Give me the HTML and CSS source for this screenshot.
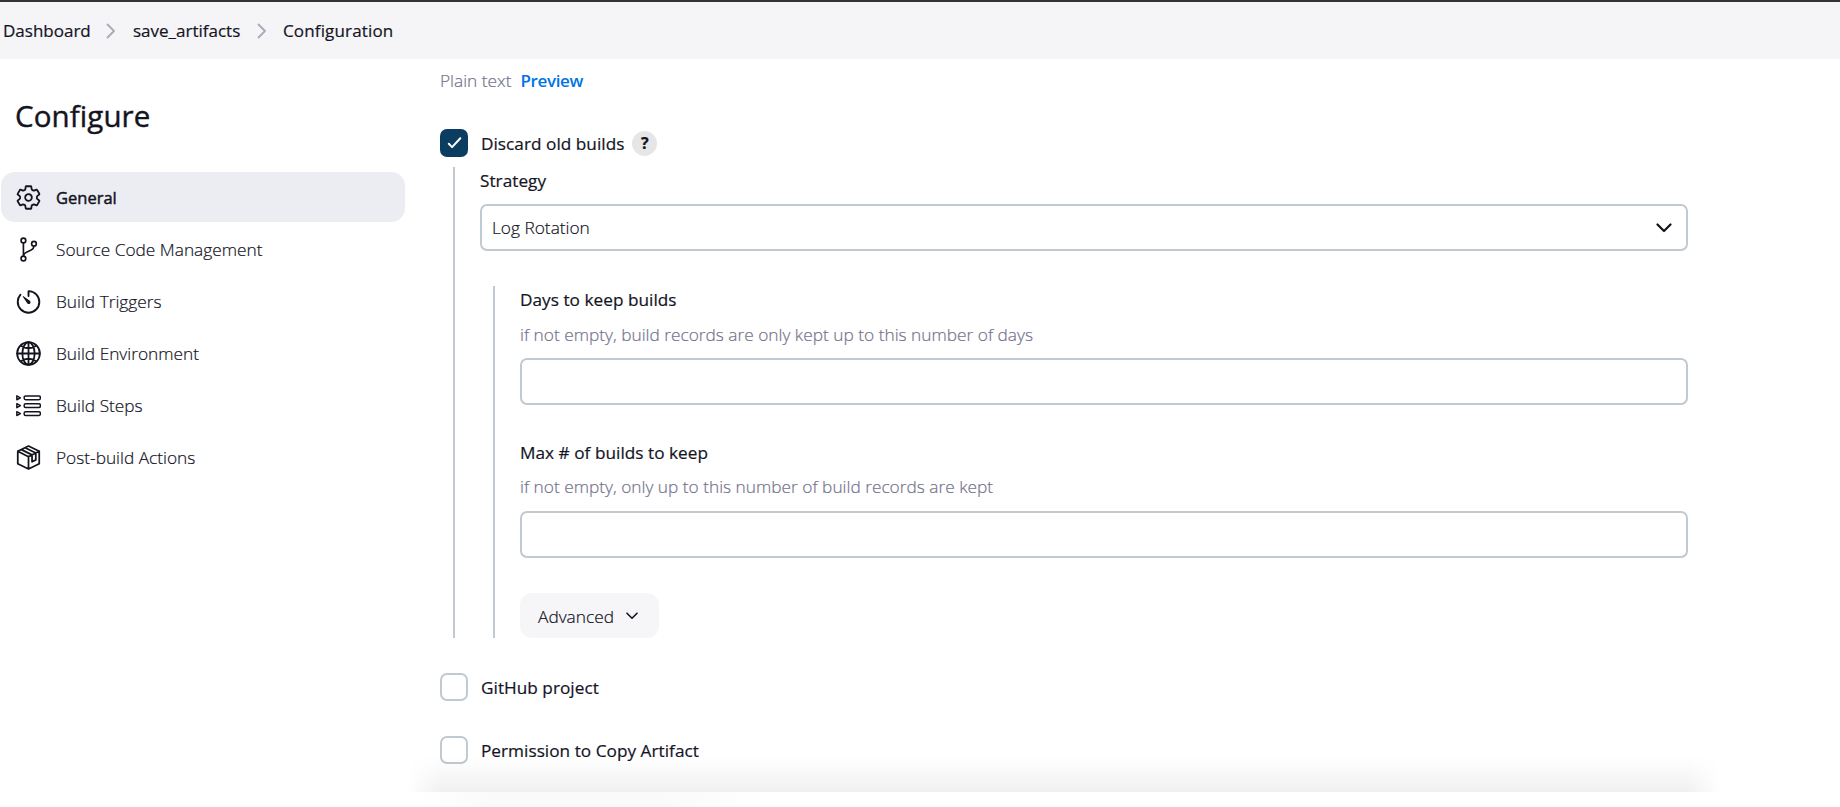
FILE: index.html
```html
<!DOCTYPE html>
<html lang="en">
<head>
<meta charset="utf-8">
<title>save_artifacts Config</title>
<link rel="stylesheet" href="styles.css">
</head>
<body>
<header class="breadcrumbs">
  <span class="crumb crumb-home">Dashboard</span>
  <svg class="crumb-sep" viewBox="0 0 10 16"><path d="M1.5 1.5 8 8l-6.500 6.500"/></svg>
  <span class="crumb crumb-job">save_artifacts</span>
  <svg class="crumb-sep" viewBox="0 0 10 16"><path d="M1.500 1.500 8 8l-6.500 6.500"/></svg>
  <span class="crumb crumb-page">Configuration</span>
</header>
<div class="layout">
  <aside class="sidebar">
    <h1 class="title">Configure</h1>
    <nav class="tasks">
      <a class="task task-active">
        <svg class="icon" viewBox="18 18 476 476"><path d="M262.290 192.310a64 64 0 1 0 57.400 57.400 64.130 64.130 0 0 0-57.400-57.400zM416.390 256a154.340 154.340 0 0 1-1.530 20.790l45.210 35.460a10.810 10.810 0 0 1 2.450 13.750l-42.770 74a10.810 10.810 0 0 1-13.140 4.590l-44.900-18.080a16.110 16.110 0 0 0-15.170 1.750A164.480 164.480 0 0 1 325 400.800a15.940 15.940 0 0 0-8.820 12.140l-6.730 47.890a11.080 11.080 0 0 1-10.680 9.170h-85.540a11.110 11.110 0 0 1-10.690-8.870l-6.720-47.820a16.070 16.070 0 0 0-9-12.220 155.300 155.300 0 0 1-21.460-12.570 16 16 0 0 0-15.110-1.710l-44.890 18.070a10.810 10.810 0 0 1-13.140-4.580l-42.770-74a10.800 10.800 0 0 1 2.450-13.750l38.210-30a16.050 16.050 0 0 0 6-14.080c-.36-4.170-.58-8.330-.58-12.500s.21-8.270.58-12.350a16 16 0 0 0-6.070-13.940l-38.190-30A10.810 10.810 0 0 1 49.480 186l42.770-74a10.810 10.810 0 0 1 13.140-4.590l44.900 18.080a16.110 16.110 0 0 0 15.170-1.750A164.480 164.480 0 0 1 187 111.200a15.940 15.940 0 0 0 8.820-12.140l6.730-47.890A11.080 11.080 0 0 1 213.230 42h85.540a11.110 11.110 0 0 1 10.690 8.870l6.720 47.820a16.070 16.070 0 0 0 9 12.220 155.300 155.300 0 0 1 21.460 12.570 16 16 0 0 0 15.110 1.710l44.890-18.070a10.810 10.810 0 0 1 13.140 4.580l42.770 74a10.800 10.800 0 0 1-2.450 13.750l-38.210 30a16.050 16.050 0 0 0-6.050 14.080c.33 4.140.55 8.300.55 12.470z"/></svg>
        <span>General</span>
      </a>
      <a class="task">
        <svg class="icon" viewBox="0 0 512 512"><circle cx="152" cy="72" r="48"/><circle cx="152" cy="440" r="48"/><circle cx="368" cy="136" r="48"/><path d="M152 392V120M368 184c0 128-216 88-216 208"/></svg>
        <span>Source Code Management</span>
      </a>
      <a class="task">
        <svg class="icon" viewBox="0 0 512 512"><path d="M112.910 128A191.850 191.850 0 0 0 64 254c-1.180 106.350 85.650 193.800 192 194 106.200.2 192-85.830 192-192 0-104.540-83.550-189.610-187.500-192a4.360 4.360 0 0 0-4.500 4.370V152" transform="translate(-38 -30) scale(1.150)"/><path class="solid" d="m233.380 278.630-79-113a8.130 8.130 0 0 1 11.320-11.320l113 79a32.500 32.500 0 0 1-37.250 53.260 33.210 33.210 0 0 1-8.070-7.940z" transform="translate(-38 -30) scale(1.150)"/></svg>
        <span>Build Triggers</span>
      </a>
      <a class="task">
        <svg class="icon" viewBox="18 18 476 476"><circle cx="256" cy="256" r="216"/><path d="M256 40c-60 0-117 97-117 216s57 216 117 216 117-97 117-216S316 40 256 40zM256 40v432M40 256h432M110 110c40 29 91 46 146 46s106-17 146-46M402 402c-40-29-91-46-146-46s-106 17-146 46"/></svg>
        <span>Build Environment</span>
      </a>
      <a class="task">
        <svg class="icon" viewBox="0 0 24 24"><g class="thin"><path d="M.8 2.700v3.800L4.200 4.600zM.8 10.300v3.800l3.400-1.900zM.8 17.900v3.800l3.400-1.900z"/><rect x="7.800" y="2.800" width="15.600" height="3.600" rx="1.500"/><rect x="7.800" y="10.400" width="15.600" height="3.600" rx="1.500"/><rect x="7.800" y="18" width="15.600" height="3.600" rx="1.500"/></g></svg>
        <span>Build Steps</span>
      </a>
      <a class="task">
        <svg class="icon" viewBox="0 0 24 24"><g class="box"><path d="M12 1 22.300 6v12L12 23 1.700 18V6zM1.700 6 12 11.200 22.300 6M12 11.200V23M5.200 4.400l10.200 5.100v6.600l3.600-1.800V7.700L8.800 2.700"/></g></svg>
        <span>Post-build Actions</span>
      </a>
    </nav>
  </aside>
  <main class="form">
    <div class="preview-row"><span class="muted">Plain text</span><a class="link">Preview</a></div>
    <div class="check-row">
      <span class="checkbox checkbox-on"><svg viewBox="0 0 28 28"><path d="m8.800 14.700 3.300 3.400 8.200-8.900"/></svg></span>
      <span class="label">Discard old builds</span>
      <span class="help">?</span>
    </div>
    <section class="group">
      <div class="label">Strategy</div>
      <div class="field select"><span>Log Rotation</span><svg viewBox="0 0 16 10"><path d="m1.500 1.500 6.500 6.500 6.500-6.500"/></svg></div>
      <section class="group group-inner">
        <div class="label">Days to keep builds</div>
        <div class="muted hint">if not empty, build records are only kept up to this number of days</div>
        <div class="field"></div>
        <div class="label label-next">Max # of builds to keep</div>
        <div class="muted hint hint-next">if not empty, only up to this number of build records are kept</div>
        <div class="field"></div>
        <div class="button"><span>Advanced</span><svg viewBox="0 0 12 8"><path d="m1 1.200 5 5 5-5"/></svg></div>
      </section>
    </section>
    <div class="check-row check-github"><span class="checkbox"></span><span class="label">GitHub project</span></div>
    <div class="check-row"><span class="checkbox"></span><span class="label">Permission to Copy Artifact</span></div>
  </main>
</div>
<div class="footer-shadow"></div>
<div class="footer-fade"></div>
</body>
</html>
```
FILE: styles.css
```css
* { box-sizing: border-box; }
body {
  margin: 0;
  height: 807px;
  overflow: hidden;
  position: relative;
  background: #fff;
  color: #14141f;
  font: 300 17.300px/24px "Open Sans", "Noto Sans", sans-serif;
  -webkit-text-stroke: .2px currentColor;
  white-space: nowrap;
}
svg { fill: none; stroke: currentColor; stroke-linecap: round; stroke-linejoin: round; flex: none; }

.breadcrumbs {
  display: flex;
  align-items: center;
  height: 59px;
  padding: 1px 0 0 3px;
  border-top: 2px solid #333336;
  background: #f5f5f8;
  font-size: 17px;
  font-weight: 500;
}
.crumb-home { width: 103px; }
.crumb-job { width: 124px; margin-left: 17px; }
.crumb-page { margin-left: 16px; letter-spacing: .15px; }
.crumb-sep { width: 10px; height: 16px; stroke: #a9a9ba; stroke-width: 1.8; }

.layout { display: grid; grid-template-columns: 405px 1249px; column-gap: 34px; }
.sidebar { padding: 37px 0 0 1px; }
.title { margin: 0 0 36px 14px; font-size: 29.500px; line-height: 40px; font-weight: 500; letter-spacing: .1px; -webkit-text-stroke-width: .4px; }
.tasks { display: grid; gap: 2px; }
.task { display: flex; align-items: center; gap: 15px; height: 50px; padding: 0 0 0 15px; border-radius: 14px; }
.task span { padding-top: 1px; }
.task-active { background: #ecedf2; font-size: 16.500px; font-weight: 500; -webkit-text-stroke-width: .45px; }
.icon { width: 25px; height: 25px; stroke-width: 34; }
.icon .solid { fill: currentColor; stroke: none; }
.icon .thin { stroke-width: 1.4; }
.icon .box { stroke-width: 1.7; }

.form { padding: 10px 0 0 1px; }
.preview-row { display: flex; gap: 9px; margin-bottom: 36px; }
.muted { color: #73738c; }
.link { color: #0073e6; font-size: 17px; font-weight: 600; letter-spacing: -.35px; -webkit-text-stroke-width: 0; }
.label { font-size: 17.200px; font-weight: 500; letter-spacing: .03px; }
.check-row { display: flex; align-items: center; height: 28px; }
.check-row .label { padding-top: 1px; }
.checkbox { width: 28px; height: 28px; margin-right: 13px; border: 2.500px solid #c1cad0; border-radius: 7px; }
.checkbox-on { border: 0; background: #0b3d61; color: #fff; }
.checkbox-on svg { display: block; width: 28px; height: 28px; stroke-width: 2; }
.help { width: 25px; height: 25px; margin-left: 8px; border-radius: 50%; background: #e6e6e7; text-align: center; font-size: 16px; font-weight: 700; line-height: 24px; }
.group { margin: 10px 0 0 13px; padding: 2px 0 0 25px; border-left: 2px solid #c1cad0; }
.group > .group-inner { margin: 35px 0 0 13px; }
.field { height: 47px; border: 2px solid #c1cad0; border-radius: 7px; background: #fff; }
.select { display: flex; align-items: center; justify-content: space-between; margin-top: 11px; padding: 1px 14px 0 10px; }
.select svg { width: 16px; height: 10px; stroke-width: 2.200; }
.hint { margin: 11px 0; }
.label-next { margin-top: 36px; }
.hint-next { margin: 10px 0 12px; }
.button { display: flex; align-items: center; gap: 12px; width: 139px; height: 45px; margin-top: 35px; padding: 2px 0 0 18px; border-radius: 12px; background: #f6f6f9; }
.button svg { width: 12px; height: 8px; margin-bottom: 2px; stroke-width: 1.600; }
.check-github { margin: 35px 0; }

.footer-shadow {
  position: absolute;
  left: 407px;
  top: 757px;
  width: 1314px;
  height: 35px;
  background: linear-gradient(rgba(0, 0, 0, 0), rgba(0, 0, 0, .06));
  mask-image: linear-gradient(90deg, transparent, #000 34px, #000 1280px, transparent);
}
.footer-fade {
  position: absolute;
  left: 420px;
  top: 792px;
  width: 350px;
  height: 15px;
  background: linear-gradient(90deg, #fff, #fafafa 20%, #fafafa 70%, #fff);
}
```
